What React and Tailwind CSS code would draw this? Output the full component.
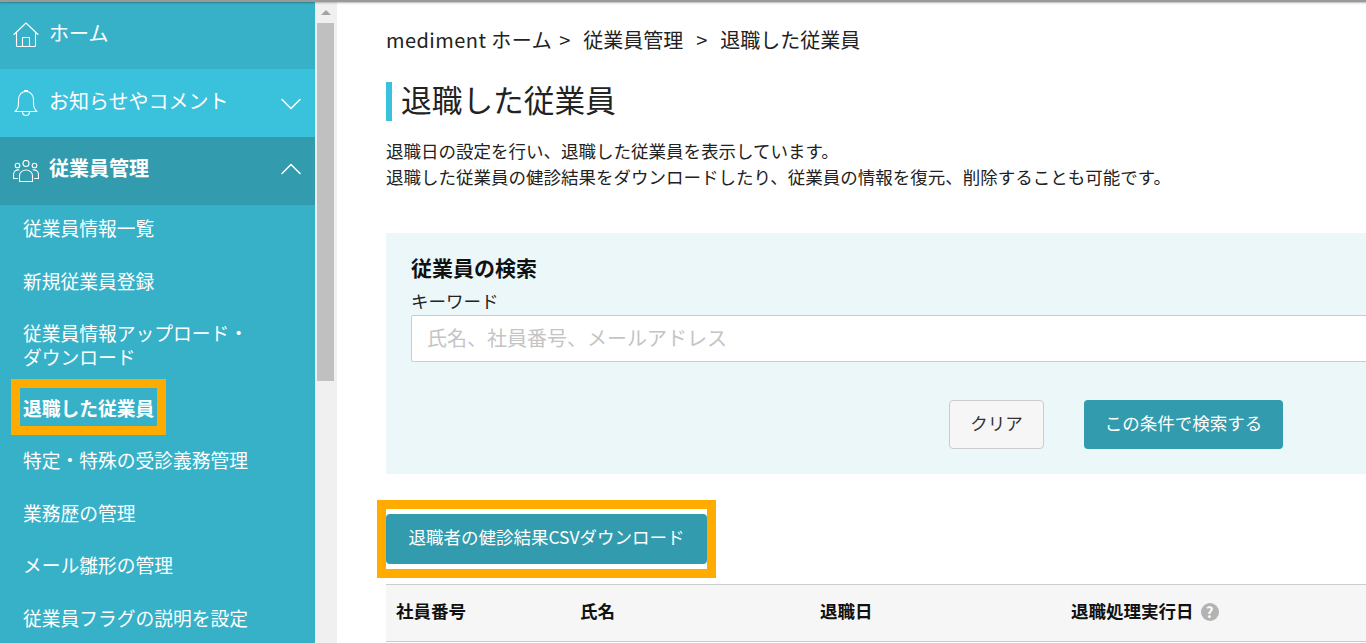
import { ChevronDown, ChevronUp } from 'lucide-react'

const subItems = [
  { label: '従業員情報一覧' },
  { label: '新規従業員登録' },
  { label: <>従業員情報アップロード・<br />ダウンロード</>, tight: true },
  { label: '退職した従業員', active: true },
  { label: '特定・特殊の受診義務管理' },
  { label: '業務歴の管理' },
  { label: 'メール雛形の管理' },
  { label: '従業員フラグの説明を設定' },
]

const HomeIcon = () => (
  <svg width="26" height="26" viewBox="0 0 26 26" fill="none" stroke="white" strokeWidth="1.1" strokeLinejoin="round" strokeLinecap="round">
    <path d="M1 12.500 13 1l12 11.500" />
    <path d="M3.500 10.500V23.500a1 1 0 0 0 1 1h17a1 1 0 0 0 1-1V10.500" />
    <path d="M9.500 24.500V15.500h7v9" />
  </svg>
)

const BellIcon = () => (
  <svg width="24" height="28" viewBox="0 0 24 28" fill="none" stroke="white" strokeWidth="1.1" strokeLinejoin="round" strokeLinecap="round">
    <path d="M1 22.500c2.500-2 3.500-4.500 3.500-8V10.500C4.500 6 7.500 2.500 12 2.500s7.500 3.500 7.500 8v4c0 3.500 1 6 3.500 8z" />
    <path d="M10.500 2.500V1.500h3v1" />
    <path d="M8.500 22.500c0 2.500 1.500 4 3.500 4s3.500-1.500 3.500-4" />
  </svg>
)

const UsersIcon = () => (
  <svg width="26" height="22" viewBox="0 0 26 22" fill="none" stroke="white" strokeWidth="1.1" strokeLinejoin="round" strokeLinecap="round">
    <circle cx="13" cy="3.500" r="3" />
    <circle cx="4.500" cy="5.500" r="2.300" />
    <circle cx="21.500" cy="5.500" r="2.300" />
    <path d="M6.500 21.500v-6c0-3 3-5.500 6.500-5.500s6.500 2.500 6.500 5.500v6z" />
    <path d="M6 10c-3-.5-5.500 1.500-5.500 4.500v4h4" />
    <path d="M20 10c3-.5 5.500 1.500 5.500 4.500v4h-4" />
  </svg>
)

function NavRow({ icon, label, bg, bold, chevron }) {
  return (
    <div className={`h-[68px] flex items-center pl-[13px] pr-[6px] text-white text-[20px] ${bg} ${bold ? 'font-bold' : ''}`}>
      <div className="w-[26px] flex justify-center shrink-0">{icon}</div>
      <span className={`ml-[10px] flex-1 leading-[30px] ${bold ? 'pb-[6px]' : 'pb-[5px]'}`}>{label}</span>
      {chevron}
    </div>
  )
}

function Sidebar() {
  return (
    <aside className="w-[315px] shrink-0 bg-[#37b1c8] pt-[1px]">
      <NavRow icon={<HomeIcon />} label="ホーム" bg="bg-[#37b1c8]" />
      <NavRow
        icon={<BellIcon />}
        label="お知らせやコメント"
        bg="bg-[#3ac1dc]"
        chevron={<ChevronDown size={36} strokeWidth={1} color="white" className="mt-[2px]" />}
      />
      <NavRow
        icon={<UsersIcon />}
        label="従業員管理"
        bg="bg-[#329cae]"
        bold
        chevron={<ChevronUp size={36} strokeWidth={1} color="white" className="mb-[5px]" />}
      />
      <ul className="text-white text-[18.75px] leading-[24px] pl-[23px] -mt-[3px]">
        {subItems.map((item, i) => (
          <li key={i} className={`py-[14.25px] relative ${item.active ? 'font-bold' : ''} ${item.tight ? '-mb-[2px]' : ''}`}>
            {item.label}
            {item.active && (
              <div className="absolute left-[-12px] top-[-3px] w-[155px] h-[56px] border-[9px] border-[#ffab00]" />
            )}
          </li>
        ))}
      </ul>
    </aside>
  )
}

function Scrollbar() {
  return (
    <div className="w-[22px] shrink-0 bg-[#f0f0f0] pl-[2px] pr-[3px] pt-[10px]">
      <div className="mx-auto w-0 h-0 border-l-[5px] border-r-[5px] border-b-[5px] border-l-transparent border-r-transparent border-b-[#a3a3a3]" />
      <div className="h-[358px] mt-[8px] bg-[#c0c0c0]" />
    </div>
  )
}

function SearchPanel() {
  return (
    <section className="mt-[43px] bg-[#ebf7f9] h-[241px] pt-[21px] pl-[25px]">
      <h2 className="font-bold text-[21px] leading-[26px] text-[#111111]">従業員の検索</h2>
      <label className="block mt-[9px] leading-[24px]">キーワード</label>
      <input
        readOnly
        placeholder="氏名、社員番号、メールアドレス"
        className="block mt-[2px] w-[1100px] h-[47px] bg-white border border-[#cccccc] rounded-[2px] px-[15px] pb-[3px] text-[20px] placeholder:text-[#c4c4c4]"
      />
      <div className="flex mt-[38px] ml-[538px] gap-[40px]">
        <button className="w-[95px] h-[49px] pb-[4px] bg-[#f6f6f6] border border-[#cccccc] rounded-[4px] text-[#333333]">クリア</button>
        <button className="w-[199px] h-[49px] pb-[4px] bg-[#329cae] rounded-[4px] text-white">この条件で検索する</button>
      </div>
    </section>
  )
}

function RetiredTable() {
  return (
    <div className="mt-[20px] h-[58px] w-[1100px] bg-[#f6f6f6] border-y border-[#cccccc] flex items-center pl-[10px] pb-[4px] font-bold text-[#111111]">
      <div className="w-[184px]">社員番号</div>
      <div className="w-[240px]">氏名</div>
      <div className="w-[251px]">退職日</div>
      <div className="flex items-center gap-[7px]">
        退職処理実行日
        <span className="w-[18px] h-[18px] mt-[2px] rounded-full bg-[#b3b3b3] text-white text-[15px] leading-[18px] text-center">?</span>
      </div>
    </div>
  )
}

export default function App() {
  return (
    <div className="relative h-[643px] w-full flex overflow-hidden bg-white text-[#222222] text-[17.5px] leading-[26px] font-['Noto_Sans_CJK_JP','Noto_Sans',sans-serif]">
      {/* top edge shadow */}
      <div className="absolute inset-x-0 top-0 h-[2px] bg-[#9a9a9a] shadow-[0_1px_2px_rgba(0,0,0,0.3)]" />
      <Sidebar />
      <Scrollbar />

      <main className="flex-1 min-w-0 pl-[49px] pt-[25px]">
        <div className="flex text-[20px] leading-[30px]">
          <span className="tracking-[0.45px]">mediment ホーム</span>
          <span className="ml-[7px]">&gt;</span>
          <span className="ml-[13px]">従業員管理</span>
          <span className="ml-[13px]">&gt;</span>
          <span className="ml-[13px]">退職した従業員</span>
        </div>

        <h1 className="mt-[27px] h-[39px] border-l-[6px] border-[#3ac1dc] pl-[9px] text-[30.7px] leading-[33px] font-normal">退職した従業員</h1>

        <p className="mt-[17px]">
          退職日の設定を行い、退職した従業員を表示しています。<br />
          退職した従業員の健診結果をダウンロードしたり、従業員の情報を復元、削除することも可能です。
        </p>

        <SearchPanel />

        <div className="relative mt-[40px] h-[50px]">
          <button className="w-[321px] h-[50px] pb-[4px] bg-[#329cae] rounded-[4px] text-white">退職者の健診結果CSVダウンロード</button>
          <div className="absolute left-[-9px] top-[-14px] w-[339px] h-[78px] border-[9px] border-[#ffab00]" />
        </div>

        <RetiredTable />
      </main>
    </div>
  )
}
